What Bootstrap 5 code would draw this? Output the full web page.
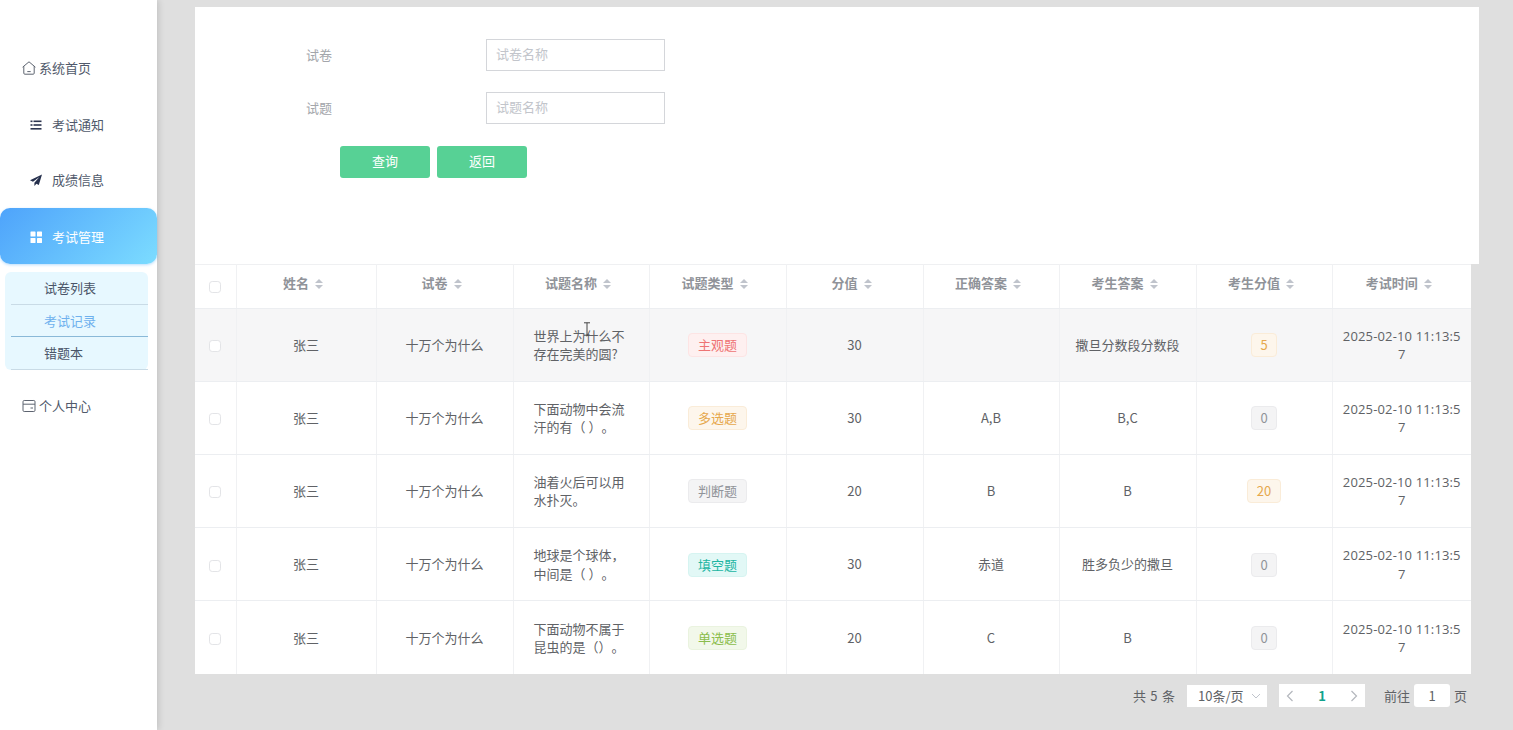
<!DOCTYPE html>
<html lang="zh-CN">
<head>
    <meta charset="UTF-8">
    <meta name="viewport" content="width=device-width, initial-scale=1.0">
    <title>考试记录</title>
    <link href="https://cdn.jsdelivr.net/npm/bootstrap@5.3.0/dist/css/bootstrap.min.css" rel="stylesheet">
    <style>
        html, body {
            height: 100%;
            overflow: hidden;
        }
        body {
            background: #dfdfdf;
            color: #606266;
            font-family: "Noto Sans CJK SC", "Noto Sans", sans-serif;
            font-size: 13px;
            text-spacing-trim: space-all;
        }
        .side-bar {
            width: 157px;
            height: 730px;
            background: #fff;
            box-shadow: 2px 0 6px rgba(0, 0, 0, 0.12);
            padding-top: 40px;
            flex-shrink: 0;
            position: relative;
        }
        .menu-item {
            height: 56px;
            color: #50596b;
            gap: 9px;
            padding-left: 29px;
        }
        .menu-item svg { flex-shrink: 0; }
        .menu-nudge { padding-top: 1px; }
        .menu-plain {
            gap: 3px;
            padding-left: 22px;
        }
        .menu-active {
            color: #fff;
            height: 56px;
            padding-top: 1px;
            border-radius: 10px;
            background: linear-gradient(135deg, #4ea3fb, #7cdcff);
            box-shadow: 0 1px 3px rgba(80, 170, 250, 0.4);
        }
        .sub-menu {
            margin: 8px 9px 0 5px;
            padding-left: 6px;
            background: #e7f8ff;
            border-radius: 6px;
        }
        .sub-item {
            height: 32.7px;
            line-height: 32px;
            padding-left: 33px;
            color: #4a5568;
            border-bottom: 1px solid #c9dbe6;
        }
        .sub-current {
            color: #6fb1ee;
            border-bottom-color: #8ab9d8;
        }
        .main-area {
            padding: 7px 0 0 38px;
        }
        .search-box {
            width: 1284px;
            height: 257px;
            background: #fff;
            padding-top: 32px;
        }
        .search-row {
            height: 53px;
            padding-left: 111px;
        }
        .search-row label {
            width: 180px;
            color: #a3a6ab;
            line-height: 32px;
        }
        .search-input {
            width: 179px;
            height: 32px;
            border: 1px solid #d4d6da;
            border-radius: 0;
            font-size: 13px;
            padding: 0 9px 3px;
            color: #606266;
        }
        .search-input::placeholder { color: #c2c5cb; }
        .search-btns {
            padding: 1px 0 0 145px;
            gap: 7px;
        }
        .green-btn {
            width: 90px;
            height: 32px;
            padding: 0 0 2px;
            border: 0;
            border-radius: 3px;
            background: #57d195;
            color: #fff;
            font-size: 13px;
        }
        .exam-table {
            width: 1276px;
            margin: 0;
            table-layout: fixed;
            background: #fff;
            --bs-table-bg: #fff;
            --bs-table-color: #606266;
        }
        .exam-table th, .exam-table td {
            border: 0;
            border-right: 1px solid #f0f1f3;
            border-bottom: 1px solid #eceef1;
            text-align: center;
            vertical-align: middle;
            padding: 1px 8px 0;
            line-height: 18.5px;
            word-break: break-all;
        }
        .exam-table tr > :last-child { border-right: 0; }
        .exam-table tbody tr:last-child td { border-bottom: 0; }
        .exam-table thead th {
            height: 44px;
            color: #909399;
            font-weight: 700;
            padding: 0 8px 5px;
            box-shadow: inset 0 1px 0 #eff0f2;
        }
        .exam-table thead th.tick-head { padding-bottom: 0; }
        .exam-table tbody td { height: 73.2px; }
        .exam-table tbody tr.row-hover td { --bs-table-bg: #f6f6f7; background: #f6f6f7; }
        .exam-table td.left-cell { text-align: left; padding: 1px 20px 0; }
        .exam-table td.time-cell {
            font-family: "Open Sans", "Noto Sans CJK SC", sans-serif;
            letter-spacing: .15px;
        }
        .sort-mark {
            display: inline-block;
            width: 8px;
            height: 10px;
            margin: 0 6px 0 6px;
            vertical-align: -1px;
        }
        .tick {
            display: block;
            width: 12px;
            height: 12px;
            margin: 2px auto 0;
            border: 1px solid #e3e4e7;
            border-radius: 2px;
            float: none;
        }
        .exam-tag {
            display: inline-block;
            height: 24px;
            line-height: 22px;
            padding: 0 8.5px;
            border: 1px solid;
            border-radius: 4px;
            white-space: nowrap;
        }
        .tag-red { color: #ee7474; background: #fef0f0; border-color: #fde4e4; }
        .tag-orange { color: #e6a84c; background: #fdf6ec; border-color: #faecd8; }
        .tag-gray { color: #909399; background: #f4f4f5; border-color: #ebebed; }
        .tag-teal { color: #21b5a2; background: #e2f8f6; border-color: #d6f4f1; }
        .tag-green { color: #8bbd4c; background: #f2f8ea; border-color: #eaf3df; }
        .pager-bar {
            width: 1272px;
            height: 44px;
            gap: 12px;
            color: #606266;
        }
        .pager-total { word-spacing: 1.5px; }
        .pager-select {
            width: 80px;
            height: 22px;
            background: #fff;
            padding: 0 6px 0 11px;
            color: #606266;
        }
        .pager-nums {
            width: 86px;
            height: 23px;
            background: #fff;
            padding: 0 7px;
        }
        .pager-now { color: #12a28c; font-weight: 700; }
        .pager-goto {
            gap: 4px;
            margin-left: 7px;
        }
        .pager-input {
            width: 36px;
            height: 23px;
            background: #fff;
            border-radius: 3px;
        }
        .caret-pointer {
            position: absolute;
            left: 583px;
            top: 322px;
        }
    </style>
</head>
<body>
    <div class="d-flex">
        <!-- Sidebar -->
        <div class="side-bar">
            <div class="menu-item menu-plain d-flex align-items-center">
                <svg width="14" height="14" viewBox="0 0 14 14" fill="none" stroke="#5d6470" stroke-width="1"><path d="M.6 6.2 7 .8l6.4 5.4M1.8 5.2v7a1 1 0 0 0 1 1h8.4a1 1 0 0 0 1-1v-7"/><path d="M5.3 10.6h3.4"/></svg>
                <span>系统首页</span>
            </div>
            <div class="menu-item menu-nudge d-flex align-items-center">
                <svg width="14" height="14" viewBox="0 0 14 14" fill="#2c3550"><rect x="1.5" y="2.5" width="2" height="1.6"/><rect x="4.5" y="2.5" width="8" height="1.6"/><rect x="4.5" y="6.2" width="8" height="1.6"/><rect x="1.5" y="6.2" width="2" height="1.6"/><rect x="1.5" y="10" width="11" height="1.6"/></svg>
                <span>考试通知</span>
            </div>
            <div class="menu-item d-flex align-items-center">
                <svg width="14" height="14" viewBox="0 0 14 14" fill="#26304d"><path d="M13 1.5 1 7.2l3 1.5 6.4-4.6-5 5.6v3.3l2-2.2 2.4 1.3z"/></svg>
                <span>成绩信息</span>
            </div>
            <div class="menu-item menu-active d-flex align-items-center">
                <svg width="14" height="14" viewBox="0 0 14 14" fill="#fff"><rect x="1.5" y="1.5" width="5" height="5" rx=".6"/><rect x="8" y="1.5" width="5" height="5" rx=".6"/><rect x="1.5" y="8" width="5" height="5" rx=".6"/><rect x="8" y="8" width="5" height="5" rx=".6"/></svg>
                <span>考试管理</span>
            </div>
            <div class="sub-menu">
                <div class="sub-item">试卷列表</div>
                <div class="sub-item sub-current">考试记录</div>
                <div class="sub-item">错题本</div>
            </div>
            <div class="menu-item menu-plain d-flex align-items-center mt-2">
                <svg width="14" height="14" viewBox="0 0 14 14" fill="none" stroke="#5d6470" stroke-width="1"><rect x="1" y="1.5" width="12" height="11" rx="1.2"/><path d="M1 5.2h12M8.5 9h2.5"/></svg>
                <span>个人中心</span>
            </div>
        </div>

        <!-- Main -->
        <div class="main-area">
            <div class="search-box">
                <div class="search-row d-flex">
                    <label for="paperName">试卷</label>
                    <input id="paperName" class="form-control search-input" placeholder="试卷名称">
                </div>
                <div class="search-row d-flex">
                    <label for="questionName">试题</label>
                    <input id="questionName" class="form-control search-input" placeholder="试题名称">
                </div>
                <div class="search-btns d-flex">
                    <button class="btn green-btn">查询</button>
                    <button class="btn green-btn">返回</button>
                </div>
            </div>

            <table class="table exam-table">
                <colgroup>
                    <col style="width:41px"><col style="width:140px"><col style="width:137px"><col style="width:136px"><col style="width:137px"><col style="width:137px"><col style="width:136px"><col style="width:137px"><col style="width:136px"><col style="width:139px">
                </colgroup>
                <thead>
                    <tr>
                        <th class="tick-head"><input class="form-check-input tick" type="checkbox"></th>
                        <th>姓名<svg class="sort-mark" viewBox="0 0 8 10" fill="#c0c4cc"><path d="M4 0 8 4H0zM4 10 0 6h8z"/></svg></th>
                        <th>试卷<svg class="sort-mark" viewBox="0 0 8 10" fill="#c0c4cc"><path d="M4 0 8 4H0zM4 10 0 6h8z"/></svg></th>
                        <th>试题名称<svg class="sort-mark" viewBox="0 0 8 10" fill="#c0c4cc"><path d="M4 0 8 4H0zM4 10 0 6h8z"/></svg></th>
                        <th>试题类型<svg class="sort-mark" viewBox="0 0 8 10" fill="#c0c4cc"><path d="M4 0 8 4H0zM4 10 0 6h8z"/></svg></th>
                        <th>分值<svg class="sort-mark" viewBox="0 0 8 10" fill="#c0c4cc"><path d="M4 0 8 4H0zM4 10 0 6h8z"/></svg></th>
                        <th>正确答案<svg class="sort-mark" viewBox="0 0 8 10" fill="#c0c4cc"><path d="M4 0 8 4H0zM4 10 0 6h8z"/></svg></th>
                        <th>考生答案<svg class="sort-mark" viewBox="0 0 8 10" fill="#c0c4cc"><path d="M4 0 8 4H0zM4 10 0 6h8z"/></svg></th>
                        <th>考生分值<svg class="sort-mark" viewBox="0 0 8 10" fill="#c0c4cc"><path d="M4 0 8 4H0zM4 10 0 6h8z"/></svg></th>
                        <th>考试时间<svg class="sort-mark" viewBox="0 0 8 10" fill="#c0c4cc"><path d="M4 0 8 4H0zM4 10 0 6h8z"/></svg></th>
                    </tr>
                </thead>
                <tbody>
                    <tr class="row-hover">
                        <td><input class="form-check-input tick" type="checkbox"></td>
                        <td>张三</td>
                        <td>十万个为什么</td>
                        <td class="left-cell">世界上为什么不存在完美的圆?</td>
                        <td><span class="exam-tag tag-red">主观题</span></td>
                        <td>30</td>
                        <td></td>
                        <td>撒旦分数段分数段</td>
                        <td><span class="exam-tag tag-orange">5</span></td>
                        <td class="time-cell">2025-02-10 11:13:57</td>
                    </tr>
                    <tr>
                        <td><input class="form-check-input tick" type="checkbox"></td>
                        <td>张三</td>
                        <td>十万个为什么</td>
                        <td class="left-cell">下面动物中会流汗的有（ ）。</td>
                        <td><span class="exam-tag tag-orange">多选题</span></td>
                        <td>30</td>
                        <td>A,B</td>
                        <td>B,C</td>
                        <td><span class="exam-tag tag-gray">0</span></td>
                        <td class="time-cell">2025-02-10 11:13:57</td>
                    </tr>
                    <tr>
                        <td><input class="form-check-input tick" type="checkbox"></td>
                        <td>张三</td>
                        <td>十万个为什么</td>
                        <td class="left-cell">油着火后可以用水扑灭。</td>
                        <td><span class="exam-tag tag-gray">判断题</span></td>
                        <td>20</td>
                        <td>B</td>
                        <td>B</td>
                        <td><span class="exam-tag tag-orange">20</span></td>
                        <td class="time-cell">2025-02-10 11:13:57</td>
                    </tr>
                    <tr>
                        <td><input class="form-check-input tick" type="checkbox"></td>
                        <td>张三</td>
                        <td>十万个为什么</td>
                        <td class="left-cell">地球是个球体，中间是（ ）。</td>
                        <td><span class="exam-tag tag-teal">填空题</span></td>
                        <td>30</td>
                        <td>赤道</td>
                        <td>胜多负少的撒旦</td>
                        <td><span class="exam-tag tag-gray">0</span></td>
                        <td class="time-cell">2025-02-10 11:13:57</td>
                    </tr>
                    <tr>
                        <td><input class="form-check-input tick" type="checkbox"></td>
                        <td>张三</td>
                        <td>十万个为什么</td>
                        <td class="left-cell">下面动物不属于昆虫的是（）。</td>
                        <td><span class="exam-tag tag-green">单选题</span></td>
                        <td>20</td>
                        <td>C</td>
                        <td>B</td>
                        <td><span class="exam-tag tag-gray">0</span></td>
                        <td class="time-cell">2025-02-10 11:13:57</td>
                    </tr>
                </tbody>
            </table>

            <div class="pager-bar d-flex justify-content-end align-items-center">
                <span class="pager-total">共 5 条</span>
                <div class="pager-select d-flex justify-content-between align-items-center">
                    <span>10条/页</span>
                    <svg width="10" height="6" viewBox="0 0 10 6" fill="none" stroke="#c0c4cc"><path d="M1 1l4 4 4-4"/></svg>
                </div>
                <div class="pager-nums d-flex justify-content-between align-items-center">
                    <svg width="8" height="12" viewBox="0 0 8 12" fill="none" stroke="#b4b7bd" stroke-width="1.2"><path d="M6.5 1 1.5 6l5 5"/></svg>
                    <span class="pager-now">1</span>
                    <svg width="8" height="12" viewBox="0 0 8 12" fill="none" stroke="#b4b7bd" stroke-width="1.2"><path d="M1.5 1l5 5-5 5"/></svg>
                </div>
                <div class="pager-goto d-flex align-items-center">
                    <span>前往</span>
                    <div class="pager-input d-flex justify-content-center align-items-center">1</div>
                    <span>页</span>
                </div>
            </div>
        </div>
    </div>

    <!-- mouse cursor captured in the screenshot -->
    <svg class="caret-pointer" width="8" height="14" viewBox="0 0 8 14" fill="none" stroke="#444" stroke-width="1"><path d="M1 .8h6M4 .8v12.4M1 13.2h6"/></svg>

    <script src="https://cdn.jsdelivr.net/npm/bootstrap@5.3.0/dist/js/bootstrap.bundle.min.js"></script>
</body>
</html>
